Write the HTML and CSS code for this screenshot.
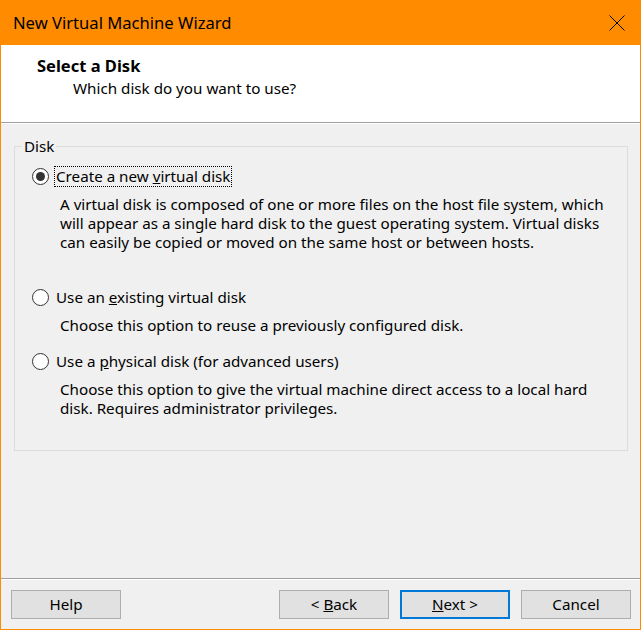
FILE: index.html
```html
<!DOCTYPE html>
<html>
<head>
<meta charset="utf-8">
<link rel="stylesheet" href="styles.css">
</head>
<body>
<div class="window">
  <div class="titlebar">
    <span class="title">New Virtual Machine Wizard</span>
    <svg class="close" width="16" height="16" viewBox="0 0 16 16"><path d="M0.5 0.5 L15.5 15.5 M15.5 0.5 L0.5 15.5" stroke="#000" stroke-width="1" fill="none"/></svg>
  </div>
  <div class="header">
    <div class="h-title">Select a Disk</div>
    <div class="h-sub">Which disk do you want to use?</div>
  </div>
  <div class="content">
    <div class="group">
      <span class="legend">Disk</span>
      <div class="option first">
        <span class="radio checked"></span>
        <span class="label focus">Create a new <u>v</u>irtual disk</span>
      </div>
      <div class="desc">A virtual disk is composed of one or more files on the host file system, which<br>will appear as a single hard disk to the guest operating system. Virtual disks<br>can easily be copied or moved on the same host or between hosts.</div>
      <div class="option second">
        <span class="radio"></span>
        <span class="label">Use an <u>e</u>xisting virtual disk</span>
      </div>
      <div class="desc">Choose this option to reuse a previously configured disk.</div>
      <div class="option third">
        <span class="radio"></span>
        <span class="label">Use a <u>p</u>hysical disk (for advanced users)</span>
      </div>
      <div class="desc">Choose this option to give the virtual machine direct access to a local hard<br>disk. Requires administrator privileges.</div>
    </div>
  </div>
  <div class="footer">
    <button class="btn">Help</button>
    <div class="spacer"></div>
    <button class="btn">&lt; <u>B</u>ack</button>
    <button class="btn default"><u>N</u>ext &gt;</button>
    <button class="btn">Cancel</button>
  </div>
</div>
</body>
</html>
```
FILE: styles.css
```css
* { box-sizing: border-box; }
html, body { margin: 0; padding: 0; background: #f0f0f0; }
body {
  font-family: "Noto Sans", "Open Sans", sans-serif;
  font-size: 15.2px;
  color: #000;
}
.window {
  width: 641px;
  height: 630px;
  border-left: 1px solid #ff8c00;
  border-right: 1px solid #ff8c00;
  border-bottom: 1px solid #ff8c00;
  background: #f0f0f0;
  display: flex;
  flex-direction: column;
}
.titlebar {
  height: 45px;
  background: #ff8b00;
  display: flex;
  align-items: center;
  padding: 1px 16px 0 13px;
  margin: 0 -1px;
}
.title {
  flex: 1;
  font-size: 16.6px;
  line-height: 22px;
}
.close { display: block; margin-top: 0; }
.header {
  height: 78px;
  background: #fff;
  border-bottom: 1px solid #a0a0a0;
  box-shadow: 0 1px 0 #fff;
  padding: 10px 0 0 36px;
}
.h-title { font-weight: bold; font-size: 16.5px; line-height: 22px; }
.h-sub { margin-top: 1px; padding-left: 36px; line-height: 20px; }
.content {
  flex: 1;
  padding-top: 23px;
}
.group {
  position: relative;
  margin: 0 12px 0 13px;
  height: 305px;
  border: 1px solid #dcdcdc;
  padding: 20px 0 0 17px;
}
.legend {
  position: absolute;
  left: 7px;
  top: -11px;
  padding: 0 2px;
  background: #f0f0f0;
  line-height: 20px;
}
.option {
  display: flex;
  align-items: center;
  height: 19px;
  line-height: 19px;
}
.option.second { margin-top: 36px; }
.option.third { margin-top: 17px; }
.radio {
  width: 17px;
  height: 17px;
  border: 1px solid #333;
  border-radius: 50%;
  background: #fff;
  position: relative;
  flex: none;
  margin-right: 6px;
}
.radio.checked::after {
  content: "";
  position: absolute;
  left: 3px;
  top: 3px;
  width: 9px;
  height: 9px;
  border-radius: 50%;
  background: #333;
}
.label { padding: 0 1px; }
.label.focus { outline: 1px dotted #000; outline-offset: 0; }
.desc {
  margin: 9px 0 0 28px;
  line-height: 19px;
}
.footer {
  border-top: 1px solid #a0a0a0;
  box-shadow: inset 0 1px 0 #fff;
  padding: 11px 9px 10px 10px;
  display: flex;
  gap: 11px;
}
.spacer { flex: 1; }
.btn {
  width: 110px;
  height: 29px;
  background: #e1e1e1;
  border: 1px solid #adadad;
  font-family: inherit;
  font-size: 15.2px;
  line-height: 18px;
  color: #000;
  padding: 0 0 2px;
  border-radius: 0;
}
.btn.default { border: 2px solid #0078d7; }
```
